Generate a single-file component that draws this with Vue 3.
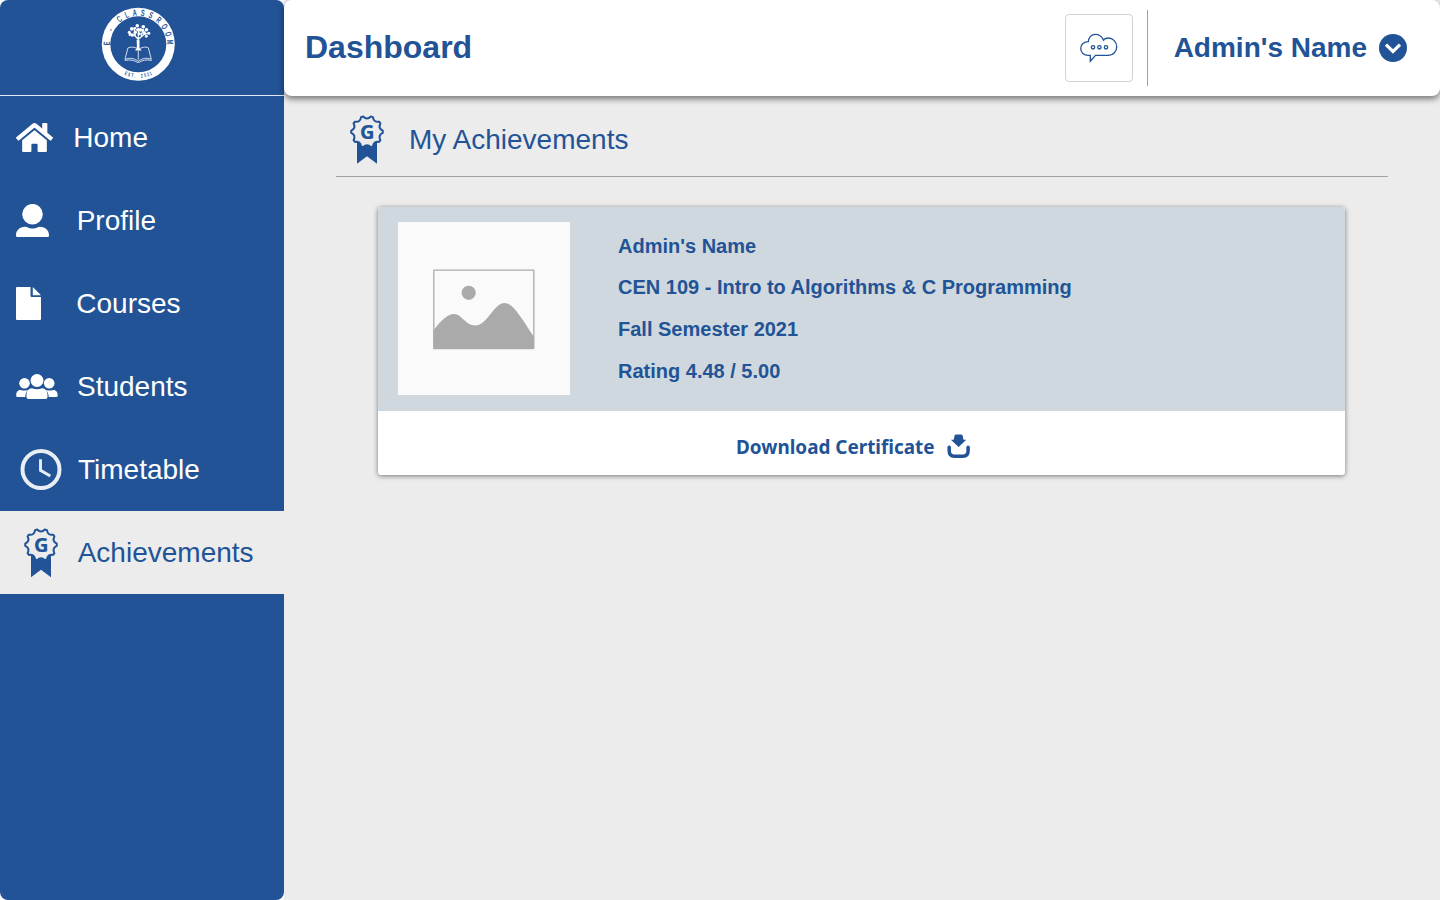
<script setup>
const nav = [
  { id: 'home', label: 'Home', left: 73.3 },
  { id: 'profile', label: 'Profile', left: 76.7 },
  { id: 'courses', label: 'Courses', left: 76.3 },
  { id: 'students', label: 'Students', left: 77 },
  { id: 'timetable', label: 'Timetable', left: 78 },
  { id: 'achievements', label: 'Achievements', left: 77.7 },
]
const active = 'achievements'

const ringTop = [
  ['E', -88], ['-', -62], ['C', -37], ['L', -21.5], ['A', -6.5], ['S', 8],
  ['S', 23.5], ['R', 40], ['O', 56], ['O', 71], ['M', 86],
]
const ringBottom = [
  ['E', 23], ['S', 17], ['T', 11], ['.', 6], ['2', -6], ['0', -12], ['2', -18], ['1', -23],
]
const leaves = [
  [-9, -12, 1.5], [-6.5, -15.5, 1.9], [-3, -12, 1.7], [-1, -18.5, 1.8], [2, -14.5, 1.9],
  [5, -17.5, 1.8], [8.2, -14.5, 1.8], [10.5, -11, 1.5], [6, -11.5, 1.7], [-6, -9, 1.5],
  [8, -8, 1.4], [1, -10.5, 1.5], [-3.5, -16, 1.4], [-8.5, -9.5, 1.2], [4.5, -14, 1.3], [-1, -14.5, 1.3],
]

const details = [
  "Admin's Name",
  'CEN 109 - Intro to Algorithms & C Programming',
  'Fall Semester 2021',
  'Rating 4.48 / 5.00',
]

// Toothed outline of the award badge
const teeth = 10
const at = (deg, r) => {
  const a = (deg - 90) * Math.PI / 180
  return `${(17 + r * Math.cos(a)).toFixed(2)} ${(16.8 + r * Math.sin(a)).toFixed(2)}`
}
let badge = ''
for (let i = 0; i < teeth; i++) {
  const mid = i * 360 / teeth
  badge += `${i ? 'L' : 'M'}${at(mid - 14, 15.8)}Q${at(mid, 11.4)} ${at(mid + 14, 15.8)}`
}
badge += 'Z'
</script>

<template>
  <div class="page">
    <aside class="sidebar">
      <div class="brand">
        <svg class="logo" width="74" height="74" viewBox="-37.3 -37.3 74 74">
          <circle r="36.500" fill="#fff" />
          <circle r="28" fill="#225396" />
          <g class="ring">
            <text v-for="([c, a], i) in ringTop" :key="'t' + i" :transform="`rotate(${a}) translate(0 -28.6) scale(.62 1)`">{{ c }}</text>
          </g>
          <g class="ring small">
            <text v-for="([c, a], i) in ringBottom" :key="'b' + i" :transform="`rotate(${a}) translate(0 33.500) scale(.6 1)`">{{ c }}</text>
          </g>
          <g fill="none" stroke="#fff" stroke-linecap="round">
            <path d="M-1 5 0-7M0-5l-5-5M0-5l6-5M0-8v-8M-5-10l-4-1M6-10l4-1M-3-9l-1-6M3-9l2-6" stroke-width="1.300" />
            <path d="M-1.500-4-1 4-3 6H3L1 4 1-4" fill="#fff" stroke-width=".4" />
            <path d="M-10 3.500C-6 2-2 3 0 5.500 3 3 7 2 10 3.500L13 15C8 13 4 14 0 17-4 14-8 13-13 15ZM0 7v8M-13 16C-8 15-4 16-1 18H1C4 16 8 15 13 16" stroke-width=".8" />
          </g>
          <circle v-for="([x, y, r], i) in leaves" :key="'l' + i" :cx="x" :cy="y" :r="r" fill="#fff" />
        </svg>
      </div>
      <nav>
        <a v-for="item in nav" :key="item.id" class="item" :class="{ active: item.id === active }">
          <span class="icon" :style="{ width: item.left + 'px' }">
            <svg v-if="item.id === 'home'" class="i-home" width="37" height="33" viewBox="0 0 576 512" preserveAspectRatio="none" fill="currentColor">
              <path d="M280.37 148.26 96 300.11V464a16 16 0 0 0 16 16l112.06-.29a16 16 0 0 0 15.92-16V368a16 16 0 0 1 16-16h64a16 16 0 0 1 16 16v95.64a16 16 0 0 0 16 16.05L464 480a16 16 0 0 0 16-16V300L295.67 148.26a12.19 12.19 0 0 0-15.3 0zM571.6 251.47 488 182.56V44.05a12 12 0 0 0-12-12h-56a12 12 0 0 0-12 12v72.61L318.47 43a48 48 0 0 0-61 0L4.34 251.47a12 12 0 0 0-1.6 16.9l25.5 31A12 12 0 0 0 45.15 301l235.22-193.74a12.19 12.19 0 0 1 15.3 0L530.9 301a12 12 0 0 0 16.9-1.6l25.5-31a12 12 0 0 0-1.7-16.93z" />
            </svg>
            <svg v-else-if="item.id === 'profile'" width="33" height="33" viewBox="0 0 33 33" fill="currentColor">
              <circle cx="16.500" cy="10.200" r="10.300" />
              <path d="M9 22.700c2 0 3.500 1.700 7.500 1.700s5.500-1.700 7.500-1.700c5.500 0 9 3.800 9 8.300v.5a1.500 1.500 0 0 1-1.500 1.500h-30a1.500 1.500 0 0 1-1.500-1.500v-.5c0-4.500 3.500-8.300 9-8.300z" />
            </svg>
            <svg v-else-if="item.id === 'courses'" width="25" height="33" viewBox="0 0 25 33" fill="currentColor">
              <path d="M1 0h13.500v8.800q0 1.300 1.300 1.300H25V32q0 1-1 1H1q-1 0-1-1V1q0-1 1-1zM16.800 0 25 8.200H16.800z" />
            </svg>
            <svg v-else-if="item.id === 'students'" width="42" height="25" viewBox="0 0 42 25" fill="currentColor">
              <circle cx="8.500" cy="9.300" r="5.300" /><circle cx="33.200" cy="9.300" r="5.300" /><circle cx="21" cy="6.500" r="6.500" />
              <path d="M4.500 16c2 .8 5 .8 7.500 0-1.500 1.500-2.700 3.500-2.700 7H1.500Q.2 23 .2 21.700C.2 18.300 1.500 16 4.500 16zM29.800 16c2 .8 5 .8 7.500 0 3 0 4.400 2.300 4.400 5.700q0 1.300-1.300 1.300H32.700c0-3.500-1.400-5.500-2.900-7zM16 14.300c3 1.200 7 1.200 10 0 3.500 0 5.500 3 5.500 7V23q0 2-2 2h-17q-2 0-2-2v-1.700c0-4 2-7 5.500-7z" />
            </svg>
            <svg v-else-if="item.id === 'timetable'" class="i-clock" width="42" height="42" viewBox="0 0 42 42" fill="none" stroke="#e9eef5">
              <circle cx="21" cy="20.500" r="18.500" stroke-width="4" />
              <path d="M20.500 10.300V21.300L30.300 27.100" stroke-width="2.900" />
            </svg>
            <svg v-else class="i-award" width="34" height="50" viewBox="0 0 34 50">
              <path d="M7 27.500H27V49.200L17 41.700 7 49.200Z" fill="#225396" />
              <path :d="badge" class="badge" />
              <text x="17.300" y="23.600" class="g">G</text>
            </svg>
          </span>
          <span>{{ item.label }}</span>
        </a>
      </nav>
    </aside>

    <div class="content">
      <header class="topbar">
        <h1>Dashboard</h1>
        <div class="actions">
          <button class="chat">
            <svg width="38" height="30" viewBox="0 0 38 30" fill="none" stroke="#225396" stroke-width="1.300">
              <path d="M8.300 8.700C4 8.700 .7 11.500 .7 15.500S4 22.300 8 22.300H10.300V28.300L15.500 22.300H28.500C33.500 22.300 36.700 18.300 36.700 13.700S33 5 28.300 5C26.500 5 25 5.600 23.300 6.700 21.500 3 18.500 1.300 15.300 1.300 11.500 1.300 8.700 4.500 8.300 8.700ZM23.300 6.700 24 8" />
              <circle cx="13" cy="14.300" r="1.700" /><circle cx="19.400" cy="14.300" r="1.700" /><circle cx="26" cy="14.300" r="1.700" />
            </svg>
          </button>
          <span class="divider"></span>
          <span class="user">Admin's Name</span>
          <svg class="chev" width="28" height="28" viewBox="0 0 28 28">
            <circle cx="14" cy="14" r="14" fill="#225396" />
            <path d="M7 10.700 14 17.500 21 10.700" fill="none" stroke="#fff" stroke-width="3.200" />
          </svg>
        </div>
      </header>

      <main>
        <div class="heading">
          <svg width="34" height="50" viewBox="0 0 34 50">
            <path d="M7 27.500H27V48.700L17 41.200 7 48.700Z" fill="#225396" />
            <path :d="badge" class="badge" />
            <text x="17.300" y="23.600" class="g">G</text>
          </svg>
          <h2>My Achievements</h2>
        </div>

        <section class="card">
          <div class="info">
            <div class="thumb">
              <svg width="102" height="81" viewBox="0 0 102 81">
                <rect x=".8" y="1.100" width="100" height="78.500" rx=".5" fill="#fafafa" stroke="#aaa" stroke-width="1.300" />
                <circle cx="35.700" cy="23.800" r="7.100" fill="#aaa" />
                <path d="M.5 61.500C8 51 15 45 21 45c8 0 11 11.500 21.500 11.500C54 56.500 61 34 71.500 34c9 0 18 17 29.500 34V80H.5Z" fill="#aaa" />
              </svg>
            </div>
            <div class="details">
              <p v-for="line in details" :key="line">{{ line }}</p>
            </div>
          </div>
          <a class="download">
            <span>Download Certificate</span>
            <svg width="24" height="25" viewBox="0 0 24 25">
              <path d="M7.500 2Q7.500.5 9 .5h5.200q1.500 0 1.500 1.500L16.500 5.800H19.300L11.600 13 3.900 5.800H6.700Z" fill="#225396" />
              <path d="M2.200 13.300v3.800Q2.200 22.200 7.300 22.200H16Q21.100 22.200 21.100 17.100V13.300" fill="none" stroke="#225396" stroke-width="3.500" stroke-linecap="round" />
            </svg>
          </a>
        </section>
      </main>
    </div>
  </div>
</template>

<style>
body { background: #fff; }
</style>

<style scoped>
.page {
  display: flex;
  height: 900px;
  width: 1440px;
  overflow: hidden;
  font-family: "Liberation Sans", Arial, sans-serif;
  color: #225396;
}
.sidebar {
  width: 284px;
  height: 900px;
  flex: none;
  background: #225396;
  border-radius: 8px;
}
.brand {
  box-sizing: border-box;
  height: 96px;
  border-bottom: 1px solid #e3e9f1;
  padding: 7px 0 0 101px;
}
.logo { display: block; }
.ring text {
  font: bold 9px "Liberation Sans", Arial, sans-serif;
  text-anchor: middle;
  fill: #225396;
}
.ring.small text { font-size: 5.5px; }
.item {
  display: flex;
  align-items: center;
  height: 83px;
  font-size: 28px;
  color: #fff;
}
.item.active { background: #ececec; color: #225396; }
.icon {
  box-sizing: border-box;
  flex: none;
  display: flex;
  padding-left: 16px;
}
.icon svg { flex: none; }
.icon .i-clock { margin-left: 4px; }
.icon .i-award { margin-left: 8px; }
.badge {
  fill: #ececec;
  stroke: #225396;
  stroke-width: 2;
  stroke-linejoin: round;
}
.g {
  font: bold 20px "Noto Sans", "Open Sans", sans-serif;
  text-anchor: middle;
  fill: #225396;
  stroke: #225396;
  stroke-width: .2;
}
.content { width: 1156px; background: #ececec; }
.topbar {
  box-sizing: border-box;
  height: 96px;
  display: flex;
  align-items: center;
  justify-content: space-between;
  padding: 0 33px 0 21px;
  background: #fff;
  border-radius: 8px;
  box-shadow: 0 3px 6px rgba(0, 0, 0, .5);
}
h1 { margin: 0 0 2px; font-size: 32px; }
.actions { display: flex; align-items: center; }
.chat {
  width: 68px;
  height: 68px;
  padding: 0;
  display: flex;
  align-items: center;
  justify-content: center;
  background: #fff;
  border: 1px solid #d3d3d3;
  border-radius: 4px;
}
.divider { width: 1px; height: 76px; margin: 0 26px 0 14px; background: #a0a0a0; }
.user { font-size: 28px; font-weight: bold; }
.chev { margin-left: 12px; }
main { padding: 0 52px; }
.heading {
  box-sizing: border-box;
  height: 81px;
  display: flex;
  align-items: center;
  gap: 25px;
  padding: 8px 0 0 14px;
  border-bottom: 1px solid #a0a4a4;
}
h2 { margin: 0; font-size: 28px; font-weight: normal; }
.card {
  width: 967px;
  margin: 30px 0 0 42px;
  border-radius: 3px;
  overflow: hidden;
  background: #fff;
  box-shadow: 0 1px 5px rgba(0, 0, 0, .5);
}
.info {
  box-sizing: border-box;
  height: 204px;
  display: flex;
  gap: 48px;
  padding: 15px 20px 0;
  background: #cfd8de;
}
.thumb {
  box-sizing: border-box;
  width: 172px;
  height: 173px;
  padding-top: 2px;
  display: flex;
  align-items: center;
  justify-content: center;
  background: #fafafa;
}
.details { padding-top: 3.7px; }
.details p { margin: 0; font-size: 20px; font-weight: bold; line-height: 41.7px; }
.download {
  height: 64px;
  display: flex;
  align-items: center;
  gap: 13px;
  padding: 6px 0 0 358px;
  box-sizing: border-box;
  font: bold 18.9px "Noto Sans", "Open Sans", sans-serif;
}
.download span { width: 198px; padding-top: 2px; white-space: nowrap; }
</style>
